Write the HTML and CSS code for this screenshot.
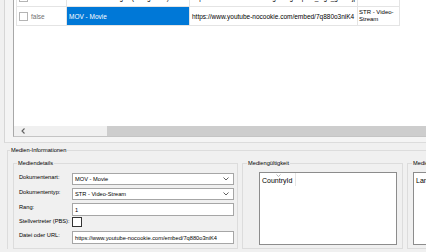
FILE: index.html
```html
<!DOCTYPE html>
<html lang="de">
<head>
    <meta charset="UTF-8">
    <meta name="viewport" content="width=device-width, initial-scale=1.0">
    <title>Medien</title>
    <link rel="stylesheet" href="styles.css">
</head>
<body>
    <div class="top">
        <div class="gridbox">
            <div class="grid-area">
                <table class="grid">
                    <colgroup>
                        <col class="w-check">
                        <col class="w-art">
                        <col class="w-url">
                        <col class="w-typ">
                    </colgroup>
                    <tr class="row">
                        <td class="c-check"><span class="cb"></span><span class="bool">false</span></td>
                        <td>PCT - Produkt-Logos (Fotografien)</td>
                        <td>https://www.sell-ce.com/images/logos/prod_logo_gross.jpg</td>
                        <td>PIC - Bild</td>
                    </tr>
                    <tr class="row">
                        <td class="c-check"><span class="cb"></span><span class="bool">false</span></td>
                        <td class="sel">MOV - Movie</td>
                        <td>https://www.youtube-nocookie.com/embed/7q880o3niK4</td>
                        <td class="wrap">STR - Video-Stream</td>
                    </tr>
                </table>
            </div>
            <div class="hscroll">
                <div class="sb-btn">
                    <svg width="4" height="6" viewBox="0 0 4 6"><polyline points="3.5,0.5 1,3 3.5,5.5" fill="none" stroke="#606060" stroke-width="1.1"/></svg>
                </div>
                <div class="sb-track"></div>
                <div class="sb-thumb"></div>
            </div>
        </div>
    </div>

    <fieldset class="info">
        <legend>Medien-Informationen</legend>
        <div class="info-row">
            <fieldset class="box details">
                <legend>Mediendetails</legend>
                <div class="frow r15">
                    <label class="lbl">Dokumentenart:</label>
                    <div class="field select"><span>MOV - Movie</span><svg width="6" height="4" viewBox="0 0 6 4"><polyline points="0.5,0.5 3,3 5.5,0.5" fill="none" stroke="#505050" stroke-width="0.9"/></svg></div>
                </div>
                <div class="frow r15">
                    <label class="lbl">Dokumententyp:</label>
                    <div class="field select"><span>STR - Video-Stream</span><svg width="6" height="4" viewBox="0 0 6 4"><polyline points="0.5,0.5 3,3 5.5,0.5" fill="none" stroke="#505050" stroke-width="0.9"/></svg></div>
                </div>
                <div class="frow r14">
                    <label class="lbl">Rang:</label>
                    <div class="field input">1</div>
                </div>
                <div class="frow r14">
                    <label class="lbl">Stellvertreter (PBS):</label>
                    <div class="chk"></div>
                </div>
                <div class="frow r13">
                    <label class="lbl">Datei oder URL:</label>
                    <div class="field input">https://www.youtube-nocookie.com/embed/7q880o3niK4</div>
                </div>
            </fieldset>

            <fieldset class="box validity">
                <legend>Mediengültigkeit</legend>
                <div class="listbox">
                    <div class="lb-head">
                        <div class="lb-col">
                            <svg class="sort" width="5" height="3" viewBox="0 0 5 3"><polyline points="0.5,0.5 2.5,2.5 4.5,0.5" fill="none" stroke="#9a9a9a" stroke-width="0.7"/></svg>
                            CountryId
                        </div>
                    </div>
                </div>
            </fieldset>

            <fieldset class="box langs">
                <legend>Mediensprachen</legend>
                <div class="listbox">
                    <div class="lb-head">
                        <div class="lb-col">LanguageId</div>
                    </div>
                </div>
            </fieldset>
        </div>
    </fieldset>
</body>
</html>
```

FILE: styles.css
```css
* {
    box-sizing: border-box;
}
body {
    margin: 0;
    width: 426px;
    height: 252px;
    overflow: hidden;
    background: #f0f0f0;
    font-family: 'Liberation Sans', Arial, sans-serif;
    color: #000;
}

/* grid panel */
.top {
    height: 143px;
    margin-left: 4px;
    padding: 0 0 5px 8px;
    border-left: 1px solid #d6d6d6;
    border-bottom: 1px solid #dcdcdc;
    background: #f4f4f4;
}
.gridbox {
    height: 137px;
    display: flex;
    flex-direction: column;
    background: #fff;
    border-left: 1px solid #a8a8a8;
    border-bottom: 1px solid #c4c4c4;
}
.grid-area {
    flex: 1;
    overflow: hidden;
    padding-left: 2px;
}
.grid {
    border-collapse: collapse;
    table-layout: fixed;
    width: 383px;
    margin-top: -13px;
    font-size: 6.5px;
}
.w-check { width: 50px; }
.w-art { width: 123px; }
.w-url { width: 168px; }
.w-typ { width: 42px; }
.grid td {
    height: 19px;
    padding: 0 2px;
    border: 1px solid #e4e4e4;
    white-space: nowrap;
    overflow: hidden;
    vertical-align: middle;
}
.grid td.wrap {
    white-space: normal;
    padding: 0 1px;
    font-size: 6px;
    line-height: 7px;
}
.grid td.sel {
    background: #0078d7;
    color: #fff;
}
.cb {
    display: inline-block;
    width: 9px;
    height: 9px;
    margin-right: 3px;
    vertical-align: middle;
    border: 1px solid #b4b4b4;
    background: #fff;
}
.bool {
    color: #707070;
    vertical-align: middle;
}
.hscroll {
    height: 10px;
    display: flex;
    background: #f0f0f0;
}
.sb-btn {
    width: 17px;
    display: flex;
    align-items: center;
    justify-content: center;
}
.sb-track {
    width: 76px;
}
.sb-thumb {
    flex: 1;
    background: #cdcdcd;
}

/* group boxes */
fieldset {
    margin: 0;
    min-width: 0;
    border: 1px solid #dcdcdc;
}
legend {
    padding: 0 1px;
    margin-left: -3px;
    font-size: 5.7px;
    line-height: 7px;
}
.info {
    margin: 4px 0 0 7px;
    padding: 0 0 0 5px;
    border-right: none;
    border-bottom: none;
}
.info-row {
    display: flex;
    gap: 4px;
    padding-top: 6px;
}
.box {
    flex: none;
    height: 89px;
}
.details {
    width: 225px;
    padding: 6px 3px 3px 5px;
}
.validity {
    width: 161px;
    padding: 5px 5px 3px 16px;
}
.langs {
    width: 120px;
    padding: 5px 5px 3px 5px;
}
.details legend {
    margin-left: -2px;
}
.validity legend {
    margin-left: -12px;
}
.langs legend {
    margin-left: -1px;
}

/* form rows */
.frow {
    display: flex;
    align-items: flex-start;
    font-size: 5.7px;
}
.r15 { height: 15px; }
.r14 { height: 14px; }
.r13 { height: 13px; }
.lbl {
    width: 53px;
    flex: none;
    line-height: 9px;
}
.field {
    width: 162px;
    background: #fff;
    border: 1px solid #a6a6a6;
    display: flex;
    align-items: center;
    padding: 0 4px 0 2px;
    white-space: nowrap;
    overflow: hidden;
}
.select {
    height: 12px;
    justify-content: space-between;
}
.input {
    height: 13px;
}
.chk {
    width: 10px;
    height: 10px;
    background: #fff;
    border: 1px solid #333;
}

/* list boxes */
.listbox {
    height: 73px;
    background: #fff;
    border: 1px solid #8c8c8c;
}
.lb-head {
    display: flex;
    height: 13px;
}
.lb-col {
    position: relative;
    width: 36px;
    padding-left: 2px;
    border-right: 1px solid #e5e5e5;
    font-size: 7px;
    line-height: 15px;
    white-space: nowrap;
}
.sort {
    position: absolute;
    top: 1px;
    left: 16px;
}
```
